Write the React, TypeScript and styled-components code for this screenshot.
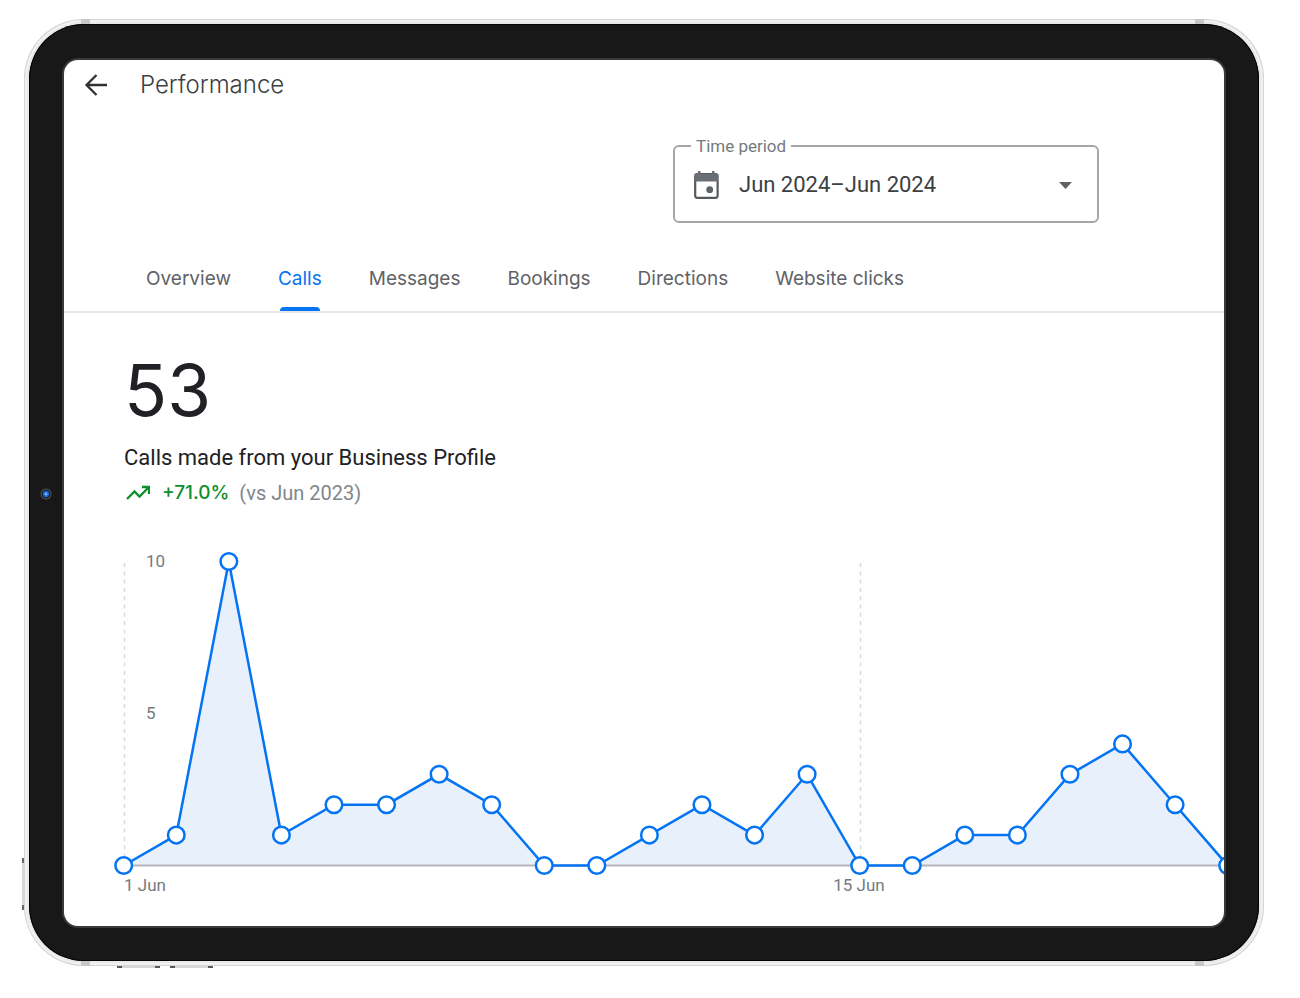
import React from 'react';
import styled, { createGlobalStyle } from 'styled-components';

const GlobalStyle = createGlobalStyle`
  *, *::before, *::after { box-sizing: border-box; }
  body { margin: 0; background: #fff; }
`;

const brandFont = `Inter, "Liberation Sans", sans-serif`;
const textFont = `Roboto, "Liberation Sans", sans-serif`;
const blue = '#0474f3';

const Page = styled.div`
  padding: 19px 36px 32px 24px;
  font-family: ${textFont};
  color: #202124;
`;

const Rim = styled.div`
  position: relative;
  padding: 5px;
  border-radius: 60px;
  background: #e9e9e9;
  box-shadow: inset 0 0 0 1px #d3d5d5, inset 0 0 0 3px #f1f1f1;
`;

const Antenna = styled.span<{ $side: 'left' | 'right'; $edge: 'top' | 'bottom' }>`
  position: absolute;
  ${(p) => p.$edge}: 0;
  ${(p) => p.$side}: ${(p) => (p.$side === 'left' ? 57 : 60)}px;
  width: 9px;
  height: 5px;
  background: #c6c8c8;
`;

const SideKey = styled.span`
  position: absolute;
  left: -2px;
  bottom: 56px;
  width: 2px;
  height: 52px;
  background: #d6d8d8;
  border: solid #666a6c;
  border-width: 5px 0;
`;

const EdgeKey = styled.span<{ $left: number }>`
  position: absolute;
  left: ${(p) => p.$left}px;
  bottom: -2px;
  width: 43px;
  height: 2px;
  background: #d6d8d8;
  border: solid #55595b;
  border-width: 0 5px;
`;

const Bezel = styled.div`
  padding: 36px 35px 35px;
  border-radius: 55px;
  background: #181818;
  box-shadow: inset 0 0 0 1px #050505;
`;

const Camera = styled.span`
  position: absolute;
  left: 16px;
  top: 50%;
  width: 12px;
  height: 12px;
  margin-top: -5px;
  border-radius: 50%;
  background: radial-gradient(circle, #6cb2ff 0 1px, #1d5fc4 2px 3px, #0b0d12 4px, #5a5a5a 5px, #181818 6px);
`;

const Screen = styled.main`
  overflow: hidden;
  border-radius: 14px;
  background: #fff;
  box-shadow: 0 0 0 2px #3a3a3a;
`;

const Header = styled.header`
  display: flex;
  align-items: center;
  gap: 31px;
  height: 50px;
  padding-left: 19px;
`;

const BackButton = styled.button`
  display: flex;
  padding: 0;
  border: 0;
  background: none;
  color: #303134;
`;

const Title = styled.h1`
  margin: 0;
  font: 300 24px/32px ${brandFont};
  color: #3c4043;
`;

const Filters = styled.div`
  display: flex;
  justify-content: flex-end;
  padding: 26px 125px 0 0;
`;

const PeriodField = styled.fieldset`
  width: 426px;
  height: 87px;
  margin: 0;
  padding: 0 16px;
  border: 2px solid #a3a7ac;
  border-radius: 6px;
`;

const PeriodLegend = styled.legend`
  height: 20px;
  padding: 0 5px;
  font-size: 17px;
  line-height: 20px;
  color: #757a80;
`;

const PeriodRow = styled.div`
  display: flex;
  align-items: center;
  height: 58px;
`;

const PeriodSelect = styled.select`
  flex: 1;
  height: 40px;
  padding: 0 0 0 20px;
  border: 0;
  appearance: none;
  background: none;
  font: 400 22px/40px ${textFont};
  color: #3c4043;
`;

const Tabs = styled.nav`
  display: flex;
  gap: 47px;
  height: 90px;
  padding: 23px 82px 0;
  border-bottom: 2px solid #e6e8e8;
`;

const Tab = styled.a<{ $active?: boolean }>`
  position: relative;
  font: 400 19px/66px ${brandFont};
  color: ${(p) => (p.$active ? blue : '#5f6368')};
  text-decoration: none;
  white-space: nowrap;

  &::after {
    content: '';
    display: ${(p) => (p.$active ? 'block' : 'none')};
    position: absolute;
    left: 2px;
    right: 2px;
    bottom: 0;
    height: 4px;
    border-radius: 4px 4px 0 0;
    background: ${blue};
  }
`;

const Summary = styled.section`
  padding: 36px 60px 0;
`;

const Total = styled.div`
  font: 400 71px/82px ${brandFont};
`;

const Caption = styled.h2`
  margin: 9px 0 0;
  font: 400 22px/36px ${textFont};
`;

const Trend = styled.p`
  display: flex;
  align-items: center;
  margin: 0;
  line-height: 34px;
`;

const Change = styled.strong`
  margin: 0 10px 0 12px;
  font: 500 19px/34px ${brandFont};
  color: #0d8f2c;
`;

const Versus = styled.span`
  font-size: 20px;
  color: #80868b;
`;

const Chart = styled.svg`
  display: block;
  width: 100%;
  height: auto;
  margin-top: 30px;
`;

const AxisLabel = styled.text`
  font: 400 17px ${textFont};
  fill: #757a80;
`;

const calls = [0, 1, 10, 1, 2, 2, 3, 2, 0, 0, 1, 2, 1, 3, 0, 0, 1, 1, 3, 4, 2, 0];
const baseline = 325.5;
const points = calls.map((v, i) => ({ x: 59.7 + i * 52.57, y: baseline - v * 30.4 }));
const line = points.map((p) => `${p.x.toFixed(1)},${p.y.toFixed(1)}`).join(' ');
const tabs = ['Overview', 'Calls', 'Messages', 'Bookings', 'Directions', 'Website clicks'];

function CallsChart() {
  return (
    <Chart viewBox="0 0 1160 386" role="img" aria-label="Calls per day, June 2024">
      <g stroke="#dcdcde" strokeWidth="1.6" strokeDasharray="4 4.3">
        <path d="M60.5 23V325" />
        <path d="M796.5 23V325" />
      </g>
      <polygon points={`${line} ${points[0].x},${baseline}`} fill="#e8f0fc" />
      <path d={`M60 ${baseline}H1160`} stroke="#b4b6bc" strokeWidth="1.8" />
      <polyline points={line} fill="none" stroke={blue} strokeWidth="2.5" />
      {points.map((p) => (
        <circle key={p.x} cx={p.x} cy={p.y} r="8.3" fill="#fff" stroke={blue} strokeWidth="2.5" />
      ))}
      <AxisLabel x="82" y="27">10</AxisLabel>
      <AxisLabel x="82" y="179">5</AxisLabel>
      <AxisLabel x="60" y="351">1 Jun</AxisLabel>
      <AxisLabel x="795" y="351" textAnchor="middle">15 Jun</AxisLabel>
    </Chart>
  );
}

export default function App() {
  return (
    <Page>
      <GlobalStyle />
      <Rim>
        <Antenna $side="left" $edge="top" />
        <Antenna $side="right" $edge="top" />
        <Antenna $side="left" $edge="bottom" />
        <Antenna $side="right" $edge="bottom" />
        <SideKey />
        <EdgeKey $left={93} />
        <EdgeKey $left={146} />
        <Bezel>
          <Camera />
          <Screen>
            <Header>
              <BackButton aria-label="Back">
                <svg width="26" height="26" viewBox="0 0 26 26" fill="none" stroke="currentColor" strokeWidth="2.3">
                  <path d="M24 13H3.5M13.5 3L3.5 13L13.5 23" />
                </svg>
              </BackButton>
              <Title>Performance</Title>
            </Header>
            <Filters>
              <PeriodField>
                <PeriodLegend>
                  <label htmlFor="period">Time period</label>
                </PeriodLegend>
                <PeriodRow>
                  <svg width="28" height="30" viewBox="0 0 28 30" aria-hidden="true">
                    <rect x="4.2" y="4.2" width="22.4" height="23.6" rx="2" fill="none" stroke="#55595e" strokeWidth="2.2" />
                    <path d="M4 4h23v7.5H4zM7 1h2.5v4H7zM21 1h2.5v4H21z" fill="#6a6f75" />
                    <circle cx="18.7" cy="19.7" r="3.4" fill="#5f6368" />
                  </svg>
                  <PeriodSelect id="period">
                    <option>Jun 2024–Jun 2024</option>
                  </PeriodSelect>
                  <svg width="30" height="8" viewBox="0 0 30 8" aria-hidden="true">
                    <path d="M8 1h13l-6.500 7z" fill="#5f6368" />
                  </svg>
                </PeriodRow>
              </PeriodField>
            </Filters>
            <Tabs>
              {tabs.map((name) => (
                <Tab key={name} href="#" $active={name === 'Calls'}>
                  {name}
                </Tab>
              ))}
            </Tabs>
            <Summary>
              <Total>53</Total>
              <Caption>Calls made from your Business Profile</Caption>
              <Trend>
                <svg width="26" height="18" viewBox="0 0 26 18" fill="none" stroke="#0d8f2c" strokeWidth="2.3">
                  <path d="M3 15L10.5 7.5L15.5 12.5L24 4M18 3H25V10" />
                </svg>
                <Change>+71.0%</Change>
                <Versus>(vs Jun 2023)</Versus>
              </Trend>
            </Summary>
            <CallsChart />
          </Screen>
        </Bezel>
      </Rim>
    </Page>
  );
}
